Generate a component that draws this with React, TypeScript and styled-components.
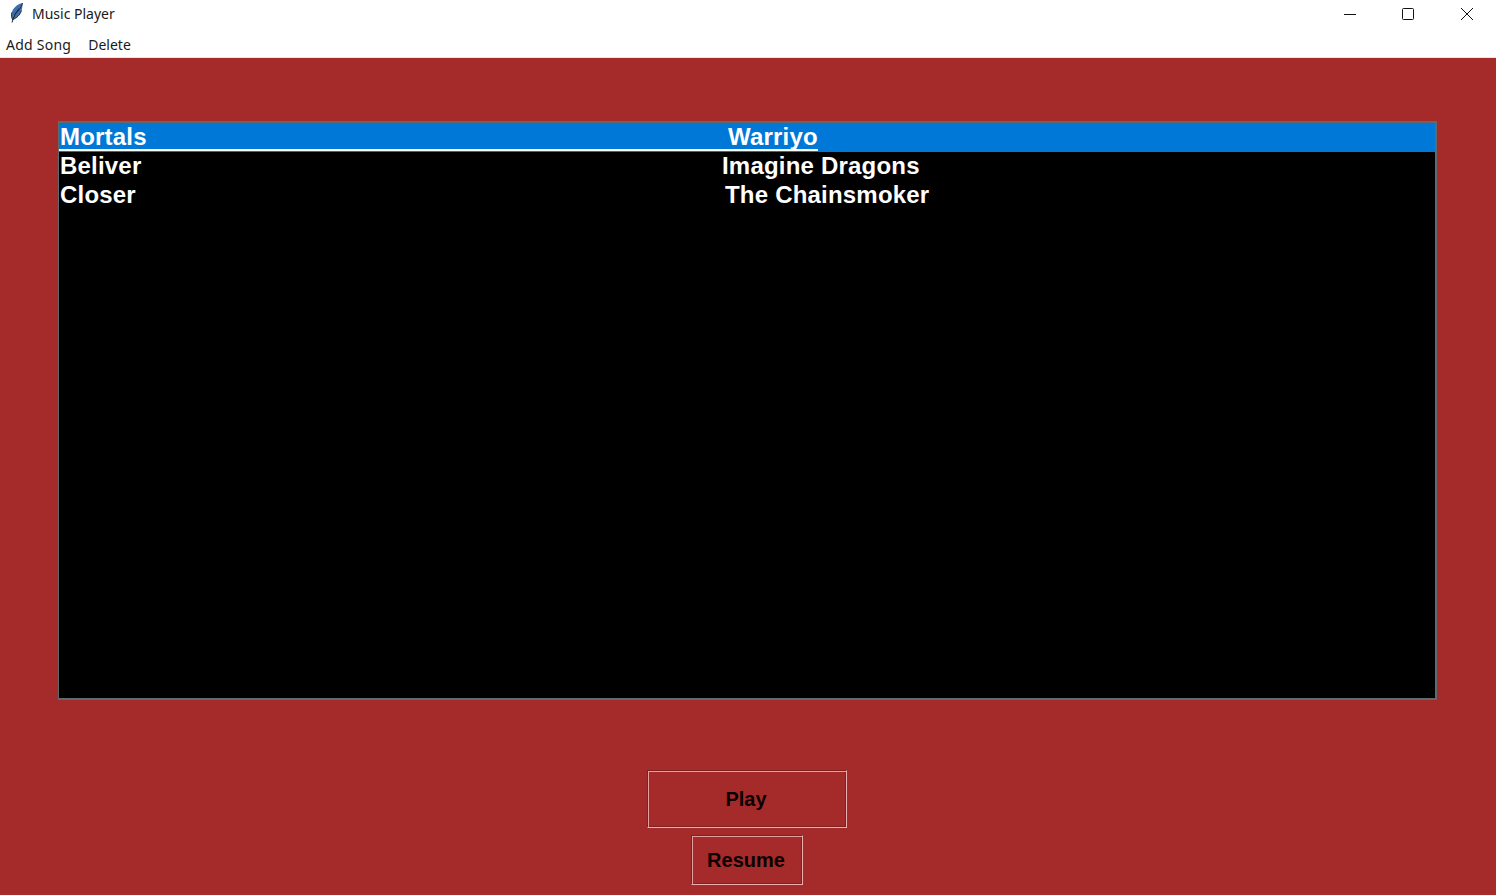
import React from "react";
import styled, { createGlobalStyle } from "styled-components";

const Global = createGlobalStyle`
  html, body { margin: 0; padding: 0; height: 100%; background: #a52a2a; }
  #root { height: 100%; }
  * { box-sizing: border-box; }
`;
const Page = styled.div`
  width: 1496px; height: 895px; display: flex; flex-direction: column; overflow: hidden;
  background: #a52a2a;
`;
const TitleBar = styled.div`
  height: 30px; background: #fff; display: flex; align-items: center; padding-left: 8px;
  font: 14px "Noto Sans", sans-serif; color: #1a1a1a;
`;
const Feather = styled.svg`width: 18px; height: 22px; margin-right: 6px; margin-top: -5px;`;
const Title = styled.span`flex: 1; margin-top: -3px;`;
const Caption = styled.div`
  width: 58.5px; height: 30px; display: flex; align-items: center; justify-content: center; margin-top: -3px;
`;
const MenuBar = styled.div`
  height: 28px; background: #fff; display: flex; gap: 17px; padding: 5px 0 0 6px;
  font: 14px "Noto Sans", sans-serif; color: #1a1a1a; border-bottom: 1px solid #e9e4e4;
`;
const MenuItem = styled.span<{ $tracking: number }>`
  letter-spacing: ${(p) => p.$tracking}px;
`;
const Main = styled.div`
  flex: 1; display: flex; flex-direction: column; align-items: flex-start; padding: 63px 0 0 58px;
`;
const ListBox = styled.div`
  width: 1379px; height: 579px; background: #000; border-style: solid; border-color: #5f6a6e;
  border-width: 2px 2px 2px 1px;
  font: bold 24px/29px "Liberation Sans", Arial, sans-serif; letter-spacing: 0.2px; color: #fff;
`;
const Row = styled.div<{ $selected?: boolean }>`
  height: 29px; white-space: pre;
  background: ${(p) => (p.$selected ? "#0078d7" : "transparent")};
`;
const Label = styled.span<{ $selected?: boolean }>`
  display: inline-flex; align-items: center; vertical-align: top;
  height: ${(p) => (p.$selected ? "28px" : "26px")};
  padding-top: ${(p) => (p.$selected ? "1px" : "0")};
  border-bottom: ${(p) => (p.$selected ? "2px solid #fff" : "none")};
`;
const Song = styled.span<{ $artistAt: number }>`
  display: inline-block; width: ${(p) => p.$artistAt}px; padding-left: 1px;
`;
const Button = styled.button<{ $w: number; $h: number }>`
  width: ${(p) => p.$w}px; height: ${(p) => p.$h}px; background: #a52a2a; padding: 0 2px 0 0;
  font: bold 20px "Liberation Sans", Arial, sans-serif; color: #0a0000;
  border-style: solid; border-width: 1px;
  border-color: #7f2020 #e8b0b0 #e8b0b0 #7f2020;
  box-shadow: inset 1px 1px 0 #e0a0a0, inset -1px -1px 0 #802020;
`;
const Controls = styled.div`
  display: flex; flex-direction: column; align-items: center; gap: 7px;
  width: 200px; margin: 70px 0 0 589px;
`;

const songs = [
  { name: "Mortals", artist: "Warriyo", at: 669, selected: true },
  { name: "Beliver", artist: "Imagine Dragons", at: 663 },
  { name: "Closer", artist: "The Chainsmoker", at: 666 },
];

export default function App() {
  return (
    <Page>
      <Global />
      <TitleBar>
        <Feather viewBox="0 0 18 22">
          <path d="M14.500 1C9.500 2 5 6 3.800 10.500 3.200 13 3.500 15.500 4.500 17.500c4-1 7.500-4.500 9-9 .8-2.500 1.200-5 1-7.500z" fill="#3d6fb0" />
          <path d="M14.500 1c-1 4-4 8-8 11.500M3.800 10.500c-.6 2.500-.3 5 .7 7 4-1 7.500-4.500 9-9" stroke="#26303e" strokeWidth="1" fill="none" />
          <path d="M11 6.500C8 10 5.500 15 4 20.500" stroke="#1c2530" strokeWidth="1" fill="none" />
        </Feather>
        <Title>Music Player</Title>
        <Caption>
          <svg width="12" height="12" viewBox="0 0 12 12"><path d="M0 6.500h12" stroke="#111" strokeWidth="1" /></svg>
        </Caption>
        <Caption>
          <svg width="12" height="12" viewBox="0 0 12 12"><rect x=".5" y=".5" width="11" height="11" rx="1" fill="none" stroke="#111" /></svg>
        </Caption>
        <Caption>
          <svg width="12" height="12" viewBox="0 0 12 12"><path d="M0 0l12 12M12 0L0 12" stroke="#111" strokeWidth="1" /></svg>
        </Caption>
      </TitleBar>
      <MenuBar>
        <MenuItem $tracking={0.25}>Add Song</MenuItem>
        <MenuItem $tracking={0}>Delete</MenuItem>
      </MenuBar>
      <Main>
        <ListBox>
          {songs.map((s) => (
            <Row key={s.name} $selected={s.selected}>
              <Label $selected={s.selected}>
                <Song $artistAt={s.at}>{s.name}</Song>
                {s.artist}
              </Label>
            </Row>
          ))}
        </ListBox>
        <Controls>
          <Button $w={200} $h={58}>Play</Button>
          <Button $w={112} $h={50}>Resume</Button>
        </Controls>
      </Main>
    </Page>
  );
}
